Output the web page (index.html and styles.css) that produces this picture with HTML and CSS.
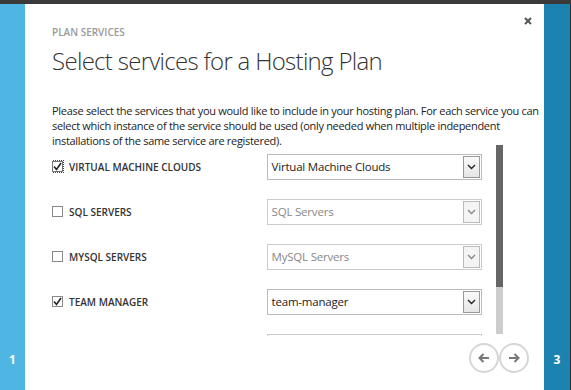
FILE: index.html
```html
<!DOCTYPE html>
<html lang="en">
<head>
    <meta charset="UTF-8">
    <title>Plan Services</title>
    <link rel="stylesheet" href="styles.css">
</head>
<body>

<div class="topbar"></div>

<div class="frame">
    <div class="step step-prev"><span>1</span></div>

    <div class="dialog">
        <button class="close" title="Close">
            <svg width="8" height="8" viewBox="0 0 8 8"><path d="M1 1 L7 7 M7 1 L1 7" stroke="#555" stroke-width="2"/></svg>
        </button>

        <div class="eyebrow">PLAN SERVICES</div>
        <h1 class="title">Select services for a Hosting Plan</h1>

        <p class="intro">Please select the services that you would like to include in your hosting plan. For each service you can select which instance of the service should be used (only needed when multiple independent installations of the same service are registered).</p>

        <div class="services">
            <div class="service-list">
                <div class="service">
                    <label class="check">
                        <span class="box checked focus">
                            <svg width="9" height="9" viewBox="0 0 9 9"><path d="M1 4.5 L3.5 7.5 L8 1" fill="none" stroke="#222" stroke-width="1.6"/></svg>
                        </span>
                        VIRTUAL MACHINE CLOUDS
                    </label>
                    <div class="select">
                        <span class="value">Virtual Machine Clouds</span>
                        <span class="arrow"><svg width="9" height="6" viewBox="0 0 9 6"><path d="M1 1 L4.5 4.5 L8 1" fill="none" stroke="#222" stroke-width="1.4"/></svg></span>
                    </div>
                </div>
                <div class="service">
                    <label class="check">
                        <span class="box"></span>
                        SQL SERVERS
                    </label>
                    <div class="select disabled">
                        <span class="value">SQL Servers</span>
                        <span class="arrow"><svg width="9" height="6" viewBox="0 0 9 6"><path d="M1 1 L4.5 4.5 L8 1" fill="none" stroke="#888" stroke-width="1.4"/></svg></span>
                    </div>
                </div>
                <div class="service">
                    <label class="check">
                        <span class="box"></span>
                        MYSQL SERVERS
                    </label>
                    <div class="select disabled">
                        <span class="value">MySQL Servers</span>
                        <span class="arrow"><svg width="9" height="6" viewBox="0 0 9 6"><path d="M1 1 L4.5 4.5 L8 1" fill="none" stroke="#888" stroke-width="1.4"/></svg></span>
                    </div>
                </div>
                <div class="service">
                    <label class="check">
                        <span class="box checked">
                            <svg width="9" height="9" viewBox="0 0 9 9"><path d="M1 4.5 L3.5 7.5 L8 1" fill="none" stroke="#222" stroke-width="1.6"/></svg>
                        </span>
                        TEAM MANAGER
                    </label>
                    <div class="select">
                        <span class="value">team-manager</span>
                        <span class="arrow"><svg width="9" height="6" viewBox="0 0 9 6"><path d="M1 1 L4.5 4.5 L8 1" fill="none" stroke="#222" stroke-width="1.4"/></svg></span>
                    </div>
                </div>
                <!-- next row, scrolled out of view -->
                <div class="service">
                    <div class="check"></div>
                    <div class="select disabled"></div>
                </div>
            </div>
            <div class="scrollbar"><div class="thumb"></div></div>
        </div>

        <div class="nav">
            <button class="nav-btn">
                <svg width="12" height="10" viewBox="0 0 12 10"><path d="M11 5 H2 M5.5 1 L1.5 5 L5.5 9" fill="none" stroke="#777" stroke-width="2"/></svg>
            </button>
            <button class="nav-btn">
                <svg width="12" height="10" viewBox="0 0 12 10"><path d="M1 5 H10 M6.5 1 L10.5 5 L6.5 9" fill="none" stroke="#777" stroke-width="2"/></svg>
            </button>
        </div>
    </div>

    <div class="step step-next"><span>3</span></div>
    <div class="edge"></div>
</div>

</body>
</html>
```

FILE: styles.css
```css
body {
    margin: 0;
    height: 390px;
    overflow: hidden;
    background: #333;
    font-family: 'Open Sans', 'Noto Sans', sans-serif;
    color: #333;
}

.topbar {
    height: 4px;
    background: #3a3a3a;
}

.frame {
    display: flex;
    height: 386px;
}

.step {
    display: flex;
    align-items: flex-end;
    justify-content: center;
    padding-bottom: 22px;
    box-sizing: border-box;
    color: #fff;
    font-size: 12px;
    font-weight: bold;
}

.step-prev {
    width: 26px;
    background: #4fb5e2;
}

.step-next {
    width: 27px;
    background: #1c83b0;
}

.edge {
    width: 1px;
    background: #2d2d2d;
}

.dialog {
    flex: 1;
    position: relative;
    background: #fff;
    padding: 21px 0 0 27px;
    display: flex;
    flex-direction: column;
}

.close {
    position: absolute;
    top: 9px;
    right: 12px;
    border: none;
    background: none;
    padding: 0;
    cursor: pointer;
}

.eyebrow {
    font-size: 10px;
    line-height: 14px;
    font-weight: 600;
    color: #999;
}

.title {
    margin: 7px 0 0;
    font-size: 24px;
    line-height: 30px;
    font-weight: 300;
    letter-spacing: -0.7px;
    color: #333;
}

.intro {
    margin: 27px 0 0;
    width: 492px;
    font-size: 11px;
    line-height: 15px;
    letter-spacing: -0.3px;
    color: #222;
}

.services {
    display: flex;
    align-items: flex-start;
    height: 191px;
    margin-top: -3px;
    overflow: hidden;
}

.service-list {
    width: 430px;
    margin-top: -1px;
}

.service {
    display: flex;
    align-items: center;
    height: 45px;
}

.check {
    display: flex;
    align-items: center;
    gap: 6px;
    width: 215px;
    font-size: 10px;
    font-weight: 600;
    color: #333;
}

.box {
    width: 11px;
    height: 11px;
    box-sizing: border-box;
    border: 1px solid #888;
    display: flex;
    align-items: center;
    justify-content: center;
}

.box.focus {
    outline: 1px dotted #444;
    outline-offset: 0;
    border-color: #777;
}

.select {
    width: 216px;
    height: 26px;
    box-sizing: border-box;
    border: 1px solid #bbb;
    display: flex;
    align-items: center;
    justify-content: space-between;
    padding: 0 1px 0 4px;
    font-size: 11.5px;
    letter-spacing: -0.2px;
    color: #222;
}

.select.disabled {
    color: #888;
    border-color: #ccc;
}

.arrow {
    width: 17px;
    height: 22px;
    box-sizing: border-box;
    border: 1px solid #999;
    background: linear-gradient(#fafafa, #e6e6e6);
    display: flex;
    align-items: center;
    justify-content: center;
}

.select.disabled .arrow {
    border-color: #bbb;
    background: #f4f4f4;
}

.scrollbar {
    width: 7px;
    height: 189px;
    margin-left: 14px;
    background: #cdcdcd;
}

.thumb {
    height: 142px;
    background: #666;
}

.nav {
    display: flex;
    justify-content: flex-end;
    padding: 7px 15px 0 0;
}

.nav-btn {
    width: 30px;
    height: 30px;
    border: 2px solid #d6d6d6;
    border-radius: 50%;
    background: #fff;
    padding: 0;
    display: flex;
    align-items: center;
    justify-content: center;
    cursor: pointer;
}
```
